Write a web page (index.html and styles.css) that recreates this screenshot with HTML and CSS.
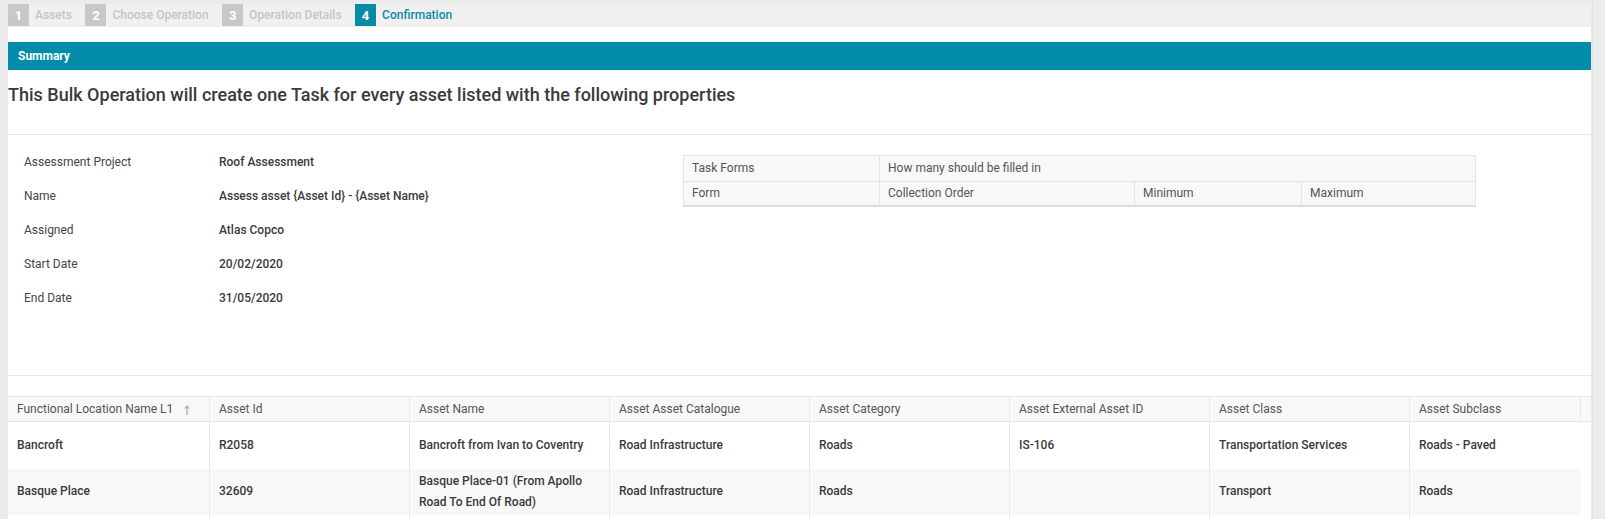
FILE: index.html
```html
<!DOCTYPE html>
<html>
<head>
<meta charset="utf-8">
<link rel="stylesheet" href="styles.css">
</head>
<body>
<div class="page">
  <div class="main">
    <div class="stepper">
      <div class="step"><span class="num">1</span><span class="lbl">Assets</span></div>
      <div class="step"><span class="num">2</span><span class="lbl">Choose Operation</span></div>
      <div class="step"><span class="num">3</span><span class="lbl">Operation Details</span></div>
      <div class="step active"><span class="num">4</span><span class="lbl">Confirmation</span></div>
    </div>
    <div class="panel">
      <div class="bar">Summary</div>
      <h1 class="heading">This Bulk Operation will create one Task for every asset listed with the following properties</h1>
      <div class="details">
        <div class="props">
          <div class="prop"><span class="k">Assessment Project</span><span class="v">Roof Assessment</span></div>
          <div class="prop"><span class="k">Name</span><span class="v">Assess asset {Asset Id} - {Asset Name}</span></div>
          <div class="prop"><span class="k">Assigned</span><span class="v">Atlas Copco</span></div>
          <div class="prop"><span class="k">Start Date</span><span class="v">20/02/2020</span></div>
          <div class="prop"><span class="k">End Date</span><span class="v">31/05/2020</span></div>
        </div>
        <div class="forms">
          <div class="frow">
            <div class="fc c1">Task Forms</div>
            <div class="fc cspan">How many should be filled in</div>
          </div>
          <div class="frow">
            <div class="fc c1">Form</div>
            <div class="fc c2">Collection Order</div>
            <div class="fc c3">Minimum</div>
            <div class="fc c4">Maximum</div>
          </div>
        </div>
      </div>
      <div class="grid">
        <div class="grow head">
          <div class="gc">Functional Location Name L1<svg class="sort" width="8" height="11" viewBox="0 0 8 11"><path d="M4 11V2" stroke="#b3b3b3" stroke-width="1.4" fill="none"/><path d="M1 4.5L4 1l3 3.5z" fill="#b3b3b3"/></svg></div>
          <div class="gc">Asset Id</div>
          <div class="gc">Asset Name</div>
          <div class="gc">Asset Asset Catalogue</div>
          <div class="gc">Asset Category</div>
          <div class="gc">Asset External Asset ID</div>
          <div class="gc">Asset Class</div>
          <div class="gc">Asset Subclass</div>
          <div class="gc gutter"></div>
        </div>
        <div class="grow">
          <div class="gc">Bancroft</div>
          <div class="gc">R2058</div>
          <div class="gc">Bancroft from Ivan to Coventry</div>
          <div class="gc">Road Infrastructure</div>
          <div class="gc">Roads</div>
          <div class="gc">IS-106</div>
          <div class="gc">Transportation Services</div>
          <div class="gc last">Roads - Paved</div>
        </div>
        <div class="grow alt">
          <div class="gc">Basque Place</div>
          <div class="gc">32609</div>
          <div class="gc">Basque Place-01 (From Apollo Road To End Of Road)</div>
          <div class="gc">Road Infrastructure</div>
          <div class="gc">Roads</div>
          <div class="gc"></div>
          <div class="gc">Transport</div>
          <div class="gc last">Roads</div>
        </div>
        <div class="grow">
          <div class="gc"></div>
          <div class="gc"></div>
          <div class="gc"></div>
          <div class="gc"></div>
          <div class="gc"></div>
          <div class="gc"></div>
          <div class="gc"></div>
          <div class="gc last"></div>
        </div>
      </div>
    </div>
  </div>
  <div class="scrollbar"></div>
</div>
</body>
</html>
```

FILE: styles.css
```css
* { box-sizing: border-box; }
html, body { margin: 0; padding: 0; }
body {
  background: #ebebeb;
  font-family: Roboto, "Liberation Sans", sans-serif;
  font-size: 12px;
  color: #333;
  overflow: hidden;
  height: 519px;
}
.page {
  display: flex;
  height: 519px;
  overflow: hidden;
}
.main {
  margin-left: 8px;
  margin-top: 4px;
  width: 1583px;
  height: 515px;
  display: flex;
  flex-direction: column;
  overflow: hidden;
}
.scrollbar {
  margin-left: 1px;
  flex: 1;
  background: #ececec;
  border-left: 1px solid #e2e2e2;
}
.stepper {
  background: #f0f0f0;
  height: 23px;
  flex: none;
  display: flex;
  align-items: flex-start;
}
.step {
  display: flex;
  align-items: center;
  height: 22px;
  margin-right: 13.5px;
}
.num {
  width: 21px;
  height: 22px;
  background: #c8c8c8;
  color: #fff;
  font-weight: 700;
  font-size: 13px;
  display: flex;
  align-items: center;
  justify-content: center;
  margin-right: 6px;
}
.lbl {
  color: #c6c6c6;
  font-weight: 500;
}
.step.active .num { background: #078ca8; }
.step.active .lbl { color: #078ca8; }
.panel {
  background: #fff;
  flex: 1;
  padding-top: 15px;
  overflow: hidden;
}
.bar {
  background: #018da9;
  color: #fff;
  font-weight: 700;
  height: 28px;
  line-height: 28px;
  padding-left: 10px;
}
.heading {
  margin: 0;
  font-size: 18px;
  font-weight: 500;
  color: #3a3a3a;
  line-height: 24px;
  padding: 13px 0 27px 0;
  border-bottom: 1px solid #e8e8e8;
}
.details {
  height: 241px;
  border-bottom: 1px solid #e8e8e8;
  display: flex;
  padding-left: 16px;
}
.props {
  width: 659px;
  padding-top: 10px;
}
.prop {
  display: flex;
  height: 34.1px;
  align-items: center;
}
.k {
  width: 195px;
  color: #444;
}
.v {
  font-weight: 500;
  color: #3a3a3a;
}
.forms {
  margin-top: 20px;
  width: 793px;
  align-self: flex-start;
  border: 1px solid #e3e3e3;
  border-bottom: 2px solid #dedede;
  background: #f8f8f8;
  color: #555;
}
.frow {
  display: flex;
  height: 24.5px;
}
.frow + .frow { border-top: 1px solid #e3e3e3; }
.fc {
  padding-left: 8px;
  display: flex;
  align-items: center;
  border-right: 1px solid #e3e3e3;
}
.fc.c1 { width: 196px; }
.fc.cspan { flex: 1; border-right: none; }
.fc.c2 { width: 255px; }
.fc.c3 { width: 167px; }
.fc.c4 { flex: 1; border-right: none; }
.grid {
  margin-top: 20px;
}
.grow {
  display: grid;
  grid-template-columns: 202px repeat(6, 200px) 171px;
  width: 1573px;
  height: 46.5px;
}
.grow.head {
  grid-template-columns: 202px repeat(6, 200px) 171px 10px;
  width: 1583px;
  height: 26px;
  background: #f8f8f8;
  border-top: 1px solid #e6e6e6;
  border-bottom: 1px solid #e6e6e6;
  color: #555;
}
.grow.alt { background: #f8f8f8; }
.gc {
  border-right: 1px solid #e8e8e8;
  padding: 0 14px 0 9px;
  display: flex;
  align-items: center;
  line-height: 21px;
  font-weight: 500;
  color: #3a3a3a;
}
.head .gc { font-weight: 400; line-height: 14px; color: #555; }
.grow .gc.last { border-right: none; }
.head .gc.gutter { border-right: none; padding: 0; }
.sort {
  margin-left: 10px;
}
```
